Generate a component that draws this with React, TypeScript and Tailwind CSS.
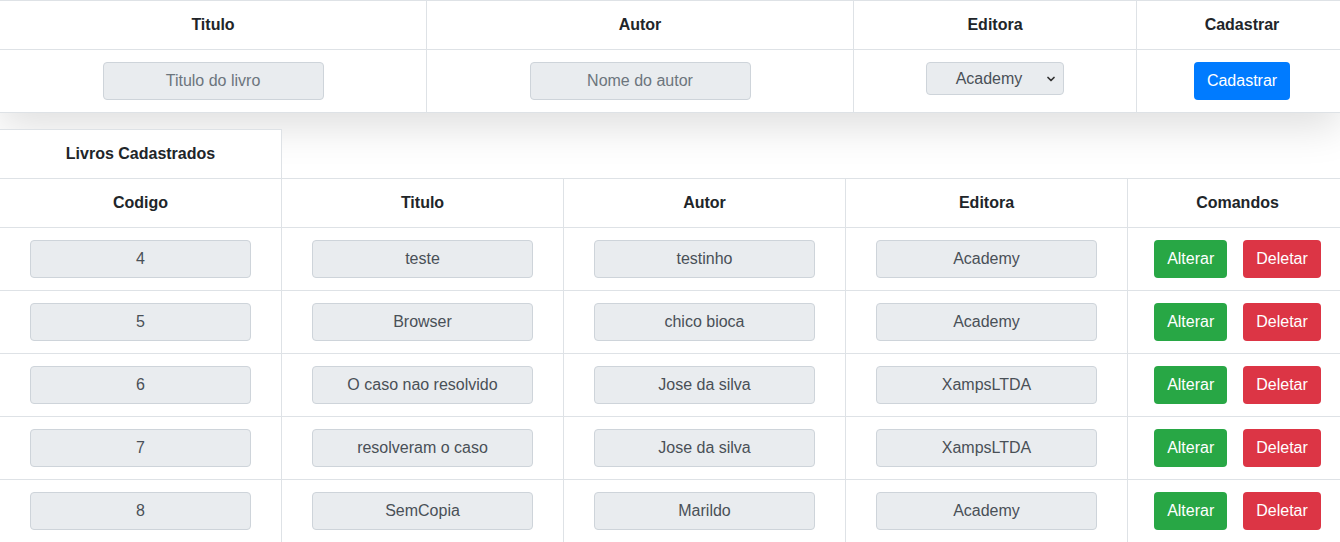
import { ChevronDown } from 'lucide-react';

interface Livro {
  codigo: number;
  titulo: string;
  autor: string;
  editora: string;
}

const livros: Livro[] = [
  { codigo: 4, titulo: 'teste', autor: 'testinho', editora: 'Academy' },
  { codigo: 5, titulo: 'Browser', autor: 'chico bioca', editora: 'Academy' },
  { codigo: 6, titulo: 'O caso nao resolvido', autor: 'Jose da silva', editora: 'XampsLTDA' },
  { codigo: 7, titulo: 'resolveram o caso', autor: 'Jose da silva', editora: 'XampsLTDA' },
  { codigo: 8, titulo: 'SemCopia', autor: 'Marildo', editora: 'Academy' }
];

const Field = ({ value, placeholder }: { value?: string; placeholder?: string }) => (
  <input
    type="text"
    readOnly
    value={value}
    placeholder={placeholder}
    className="h-[38px] w-[221px] rounded border border-[#ced4da] bg-[#e9ecef] px-3 text-center text-base text-[#495057] placeholder:text-[#6c757d] focus:outline-none"
  />
);

const App = () => {
  return (
    <div className="min-h-[542px] w-full bg-white font-['Liberation_Sans',Arial,sans-serif] text-base text-[#212529]">
      {/* formulario de cadastro */}
      <div className="border-t border-[#dee2e6] bg-white shadow-[0_14px_40px_rgba(0,0,0,0.13)]">
        <div className="grid h-[49px] grid-cols-[427px_427px_283px_1fr] border-b border-[#dee2e6] font-bold">
          <div className="flex items-center justify-center border-r border-[#dee2e6]">Titulo</div>
          <div className="flex items-center justify-center border-r border-[#dee2e6]">Autor</div>
          <div className="flex items-center justify-center border-r border-[#dee2e6]">Editora</div>
          <div className="flex items-center justify-center pl-[7px]">Cadastrar</div>
        </div>
        <div className="grid h-[63px] grid-cols-[427px_427px_283px_1fr] border-b border-[#dee2e6]">
          <div className="flex justify-center border-r border-[#dee2e6] pt-3">
            <Field placeholder="Titulo do livro" />
          </div>
          <div className="flex justify-center border-r border-[#dee2e6] pt-3">
            <Field placeholder="Nome do autor" />
          </div>
          <div className="flex justify-center border-r border-[#dee2e6] pt-3">
            <div className="relative flex h-[33px] w-[138px] items-center justify-center rounded border border-[#ced4da] bg-[#e9ecef] pr-3 text-[#495057]">
              Academy
              <ChevronDown className="absolute right-[6px] top-[10px] h-[12px] w-[12px] text-[#333]" strokeWidth={3.5} />
            </div>
          </div>
          <div className="flex justify-center pl-[7px] pt-3">
            <button className="h-[38px] rounded bg-[#007bff] px-[13px] text-white">Cadastrar</button>
          </div>
        </div>
      </div>

      {/* livros cadastrados */}
      <div className="mt-4">
        <div className="flex h-[49px] w-[282px] items-center justify-center border-t border-r border-[#dee2e6] bg-white font-bold">
          Livros Cadastrados
        </div>
        <div className="grid h-[50px] grid-cols-[282px_282px_282px_282px_1fr] border-y border-[#dee2e6] bg-white font-bold">
          <div className="flex items-center justify-center border-r border-[#dee2e6]">Codigo</div>
          <div className="flex items-center justify-center border-r border-[#dee2e6]">Titulo</div>
          <div className="flex items-center justify-center border-r border-[#dee2e6]">Autor</div>
          <div className="flex items-center justify-center border-r border-[#dee2e6]">Editora</div>
          <div className="flex items-center justify-center pl-[7px]">Comandos</div>
        </div>
        {livros.map((livro, i) => (
          <div
            key={livro.codigo}
            className={`grid grid-cols-[282px_282px_282px_282px_1fr] bg-white ${
              i < livros.length - 1 ? 'h-[63px] border-b border-[#dee2e6]' : 'h-[62px]'
            }`}
          >
            <div className="flex justify-center border-r border-[#dee2e6] pt-3">
              <Field value={String(livro.codigo)} />
            </div>
            <div className="flex justify-center border-r border-[#dee2e6] pt-3">
              <Field value={livro.titulo} />
            </div>
            <div className="flex justify-center border-r border-[#dee2e6] pt-3">
              <Field value={livro.autor} />
            </div>
            <div className="flex justify-center border-r border-[#dee2e6] pt-3">
              <Field value={livro.editora} />
            </div>
            <div className="flex justify-center gap-4 pl-[7px] pt-3">
              <button className="h-[38px] rounded bg-[#28a745] px-[13px] text-white">Alterar</button>
              <button className="h-[38px] rounded bg-[#dc3545] px-[13px] text-white">Deletar</button>
            </div>
          </div>
        ))}
      </div>
    </div>
  );
};

export default App;
